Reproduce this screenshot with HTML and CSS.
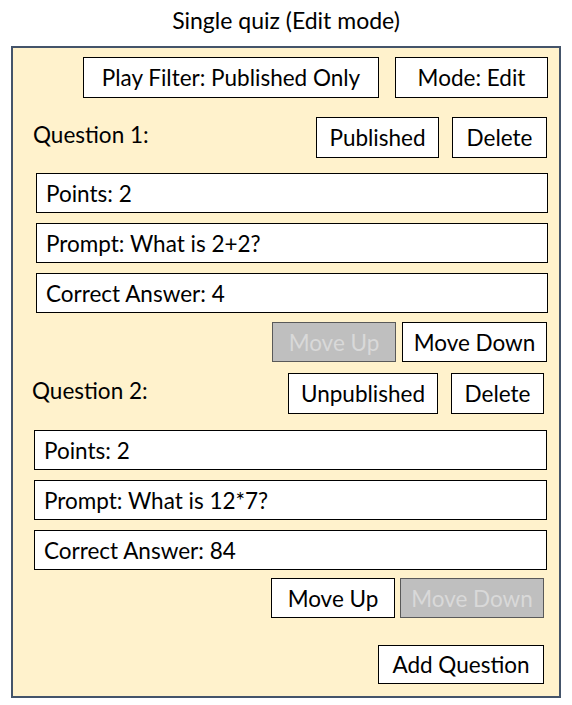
FILE: index.html
```html
<!DOCTYPE html>
<html>
<head>
<meta charset="utf-8">
<link rel="stylesheet" href="styles.css">
</head>
<body>
<div class="title">Single quiz (Edit mode)</div>
<div class="panel">
  <div class="toolbar">
    <div class="btn btn-filter">Play Filter: Published Only</div>
    <div class="btn btn-mode">Mode: Edit</div>
  </div>

  <div class="question q1">
    <div class="q-head">
      <div class="q-label">Question 1:</div>
      <div class="q-actions">
        <div class="btn btn-pub">Published</div>
        <div class="btn btn-del">Delete</div>
      </div>
    </div>
    <div class="fields">
      <div class="field">Points: 2</div>
      <div class="field">Prompt: What is 2+2?</div>
      <div class="field">Correct Answer: 4</div>
    </div>
    <div class="move-row">
      <div class="btn btn-up disabled">Move Up</div>
      <div class="btn btn-down">Move Down</div>
    </div>
  </div>

  <div class="question q2">
    <div class="q-head">
      <div class="q-label">Question 2:</div>
      <div class="q-actions">
        <div class="btn btn-unpub">Unpublished</div>
        <div class="btn btn-del">Delete</div>
      </div>
    </div>
    <div class="fields">
      <div class="field">Points: 2</div>
      <div class="field">Prompt: What is 12*7?</div>
      <div class="field">Correct Answer: 84</div>
    </div>
    <div class="move-row">
      <div class="btn btn-up">Move Up</div>
      <div class="btn btn-down disabled">Move Down</div>
    </div>
  </div>

  <div class="footer">
    <div class="btn btn-add">Add Question</div>
  </div>
</div>
</body>
</html>
```

FILE: styles.css
```css
* { box-sizing: border-box; }
body {
  margin: 0;
  background: #ffffff;
  font-family: "Lato", "Open Sans", sans-serif;
  font-size: 22.5px;
  color: #000;
}
.title {
  height: 46px;
  display: flex;
  align-items: center;
  justify-content: center;
  font-size: 23px;
  padding-bottom: 6px;
}
.panel {
  margin-left: 11px;
  width: 550px;
  height: 652px;
  background: #fff2cc;
  border: 2px solid #44546a;
  display: flex;
  flex-direction: column;
}
.btn {
  height: 41px;
  border: 1.5px solid #000;
  background: #fff;
  display: flex;
  align-items: center;
  justify-content: center;
  white-space: nowrap;
}
.btn.disabled {
  background: #bfbfbf;
  border-color: #595959;
  color: #d9d9d9;
}
.toolbar {
  display: flex;
  justify-content: flex-end;
  gap: 16px;
  margin-top: 9px;
  padding-right: 11px;
}
.btn-filter { width: 296px; }
.btn-mode { width: 153px; }

.q-head {
  display: flex;
  justify-content: space-between;
  align-items: center;
}
.q-label { margin-top: -7px; }
.q-actions { display: flex; gap: 13px; }
.btn-pub { width: 123px; }
.btn-unpub { width: 150px; }
.btn-del { width: 95px; }

.fields {
  display: flex;
  flex-direction: column;
  gap: 10px;
}
.field {
  height: 40px;
  background: #fff;
  border: 1.5px solid #000;
  display: flex;
  align-items: center;
  padding-left: 9px;
}
.move-row {
  display: flex;
  justify-content: flex-end;
}
.btn-up { width: 124px; height: 40px; }
.btn-down { width: 145px; height: 40px; }

.q1 { margin-top: 19px; }
.q1 .q-head { padding-left: 20px; padding-right: 12px; }
.q1 .fields { margin-top: 15px; padding-left: 23px; padding-right: 11px; }
.q1 .move-row { margin-top: 9px; gap: 6px; padding-right: 12px; }

.q2 { margin-top: 11px; }
.q2 .q-head { padding-left: 19px; padding-right: 15px; }
.q2 .btn-del { width: 93px; }
.q2 .fields { margin-top: 16px; padding-left: 21px; padding-right: 12px; }
.q2 .move-row { margin-top: 8px; gap: 5px; padding-right: 15px; }
.q2 .btn-down { width: 144px; }

.footer {
  display: flex;
  justify-content: flex-end;
  margin-top: 27px;
  padding-right: 15px;
}
.btn-add { width: 166px; height: 39px; }
```
